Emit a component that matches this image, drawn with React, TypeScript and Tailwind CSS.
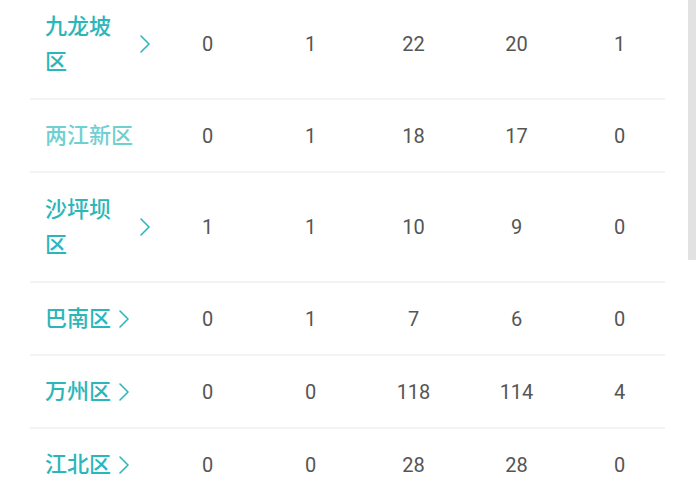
import React from 'react';

type Row = { name: string; link: boolean; wrap?: boolean; vals: number[] };

const rows: Row[] = [
    { name: '九龙坡区', link: true, wrap: true, vals: [0, 1, 22, 20, 1] },
    { name: '两江新区', link: false, vals: [0, 1, 18, 17, 0] },
    { name: '沙坪坝区', link: true, wrap: true, vals: [1, 1, 10, 9, 0] },
    { name: '巴南区', link: true, vals: [0, 1, 7, 6, 0] },
    { name: '万州区', link: true, vals: [0, 0, 118, 114, 4] },
    { name: '江北区', link: true, vals: [0, 0, 28, 28, 0] },
];

const Chevron = () => (
    <svg width="12" height="20" viewBox="0 0 12 20" className="shrink-0">
        <path d="M2 2 L10 10 L2 18" fill="none" stroke="#2bb6b9" strokeWidth="1.6" strokeLinecap="round" strokeLinejoin="round" />
    </svg>
);

export default function App() {
    return (
        <div className="relative w-[700px] h-[500px] overflow-hidden bg-white font-['Roboto','Noto_Sans_CJK_SC',sans-serif]">
            <div className="-mt-[10px] ml-[30px] w-[635px]">
                {rows.map((r, i) => (
                    <div
                        key={i}
                        className={`flex items-center border-b-2 border-[#f3f3f3] ${r.wrap ? 'h-[110px]' : 'h-[73px]'}`}
                    >
                        <div className="w-[126px] shrink-0 pl-[15px] flex items-center gap-[7px]">
                            {r.link ? (
                                <>
                                    <span className={`text-[22px] leading-[35px] font-medium text-[#2bb6b9] ${r.wrap ? 'max-w-[87px]' : ''}`}>
                                        {r.name}
                                    </span>
                                    <Chevron />
                                </>
                            ) : (
                                <span className="text-[22px] leading-[35px] font-medium text-[#6fd0d1] whitespace-nowrap">{r.name}</span>
                            )}
                        </div>
                        {r.vals.map((v, j) => (
                            <div key={j} className="w-[103px] shrink-0 text-center text-[20px] text-[#555555]">
                                {v}
                            </div>
                        ))}
                    </div>
                ))}
            </div>
            <div className="absolute left-[688px] top-0 w-[8px] h-[260px] bg-[#e2e2e2]" />
        </div>
    );
}
